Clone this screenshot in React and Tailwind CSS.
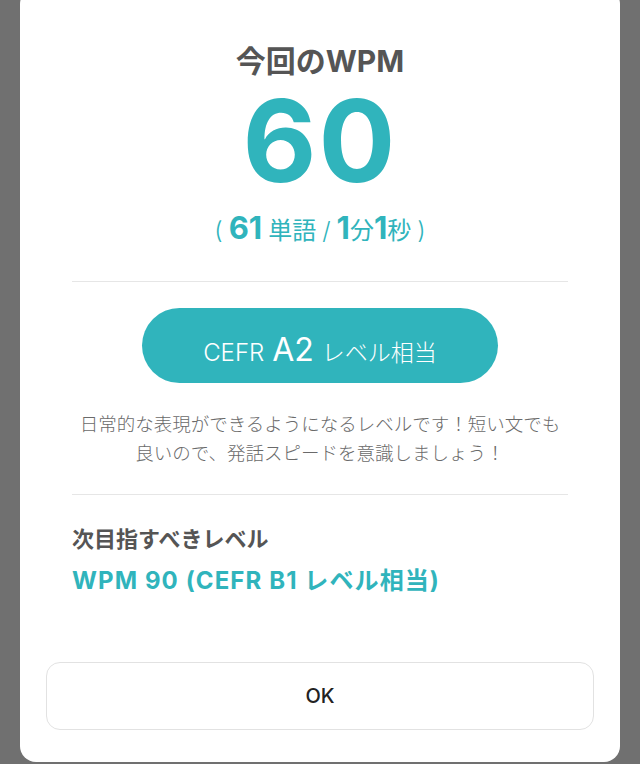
const latin = { fontFamily: 'Inter, "Noto Sans CJK JP", sans-serif' };

export default function App() {
  return (
    <div className="h-[764px] w-full overflow-hidden bg-[#707070] px-[20px]" style={latin}>
      <div className="mt-[-12px] flex h-[774px] w-[600px] flex-col rounded-[16px] bg-white">
        <div className="flex flex-col items-center px-[52px]">
          <h2 className="mt-[55px] text-[30px] font-bold leading-[36px] text-[#555555]">今回のWPM</h2>
          <div className="mt-[12px] text-[114px] font-bold leading-[100px] tracking-[2px] text-[#30b4bc]">60</div>
          <div className="mt-[20px] flex items-baseline gap-[6px] text-[24px] leading-[34px] text-[#30b4bc]">
            <span className="font-light">(</span>
            <span className="text-[31px] font-bold">61</span>
            <span>単語</span>
            <span className="font-light">/</span>
            <span>
              <span className="text-[31px] font-bold">1</span>分<span className="text-[31px] font-bold">1</span>秒
            </span>
            <span className="font-light">)</span>
          </div>
          <div className="mt-[33px] h-px w-full bg-[#e6e6e6]" />
          <button
            type="button"
            className="mt-[26px] flex h-[75px] w-[356px] items-baseline justify-center gap-[8px] rounded-full bg-[#30b4bc] pt-[18px] text-white"
          >
            <span className="text-[24px] font-light">CEFR</span>
            <span className="text-[32px] font-normal">A2</span>
            <span className="text-[23px] font-light">レベル相当</span>
          </button>
          <p className="mt-[27px] text-center text-[18.5px] font-light leading-[29px] text-[#6a6a6a]">
            日常的な表現ができるようになるレベルです！短い文でも
            <br />
            良いので、発話スピードを意識しましょう！
          </p>
          <div className="mt-[26px] h-px w-full bg-[#e6e6e6]" />
          <div className="mt-[29px] w-full">
            <div className="text-[22px] font-bold leading-[30px] text-[#555555]">次目指すべきレベル</div>
            <div className="mt-[12px] text-[24px] font-bold leading-[30px] tracking-[1.1px] text-[#30b4bc]">
              WPM 90 (CEFR B1 レベル相当)
            </div>
          </div>
        </div>
        <div className="mt-[66px] px-[26px]">
          <button
            type="button"
            className="flex h-[68px] w-full items-center justify-center rounded-[14px] border border-[#e2e2e2] bg-white text-[20px] font-medium text-[#222222]"
          >
            OK
          </button>
        </div>
      </div>
    </div>
  );
}
